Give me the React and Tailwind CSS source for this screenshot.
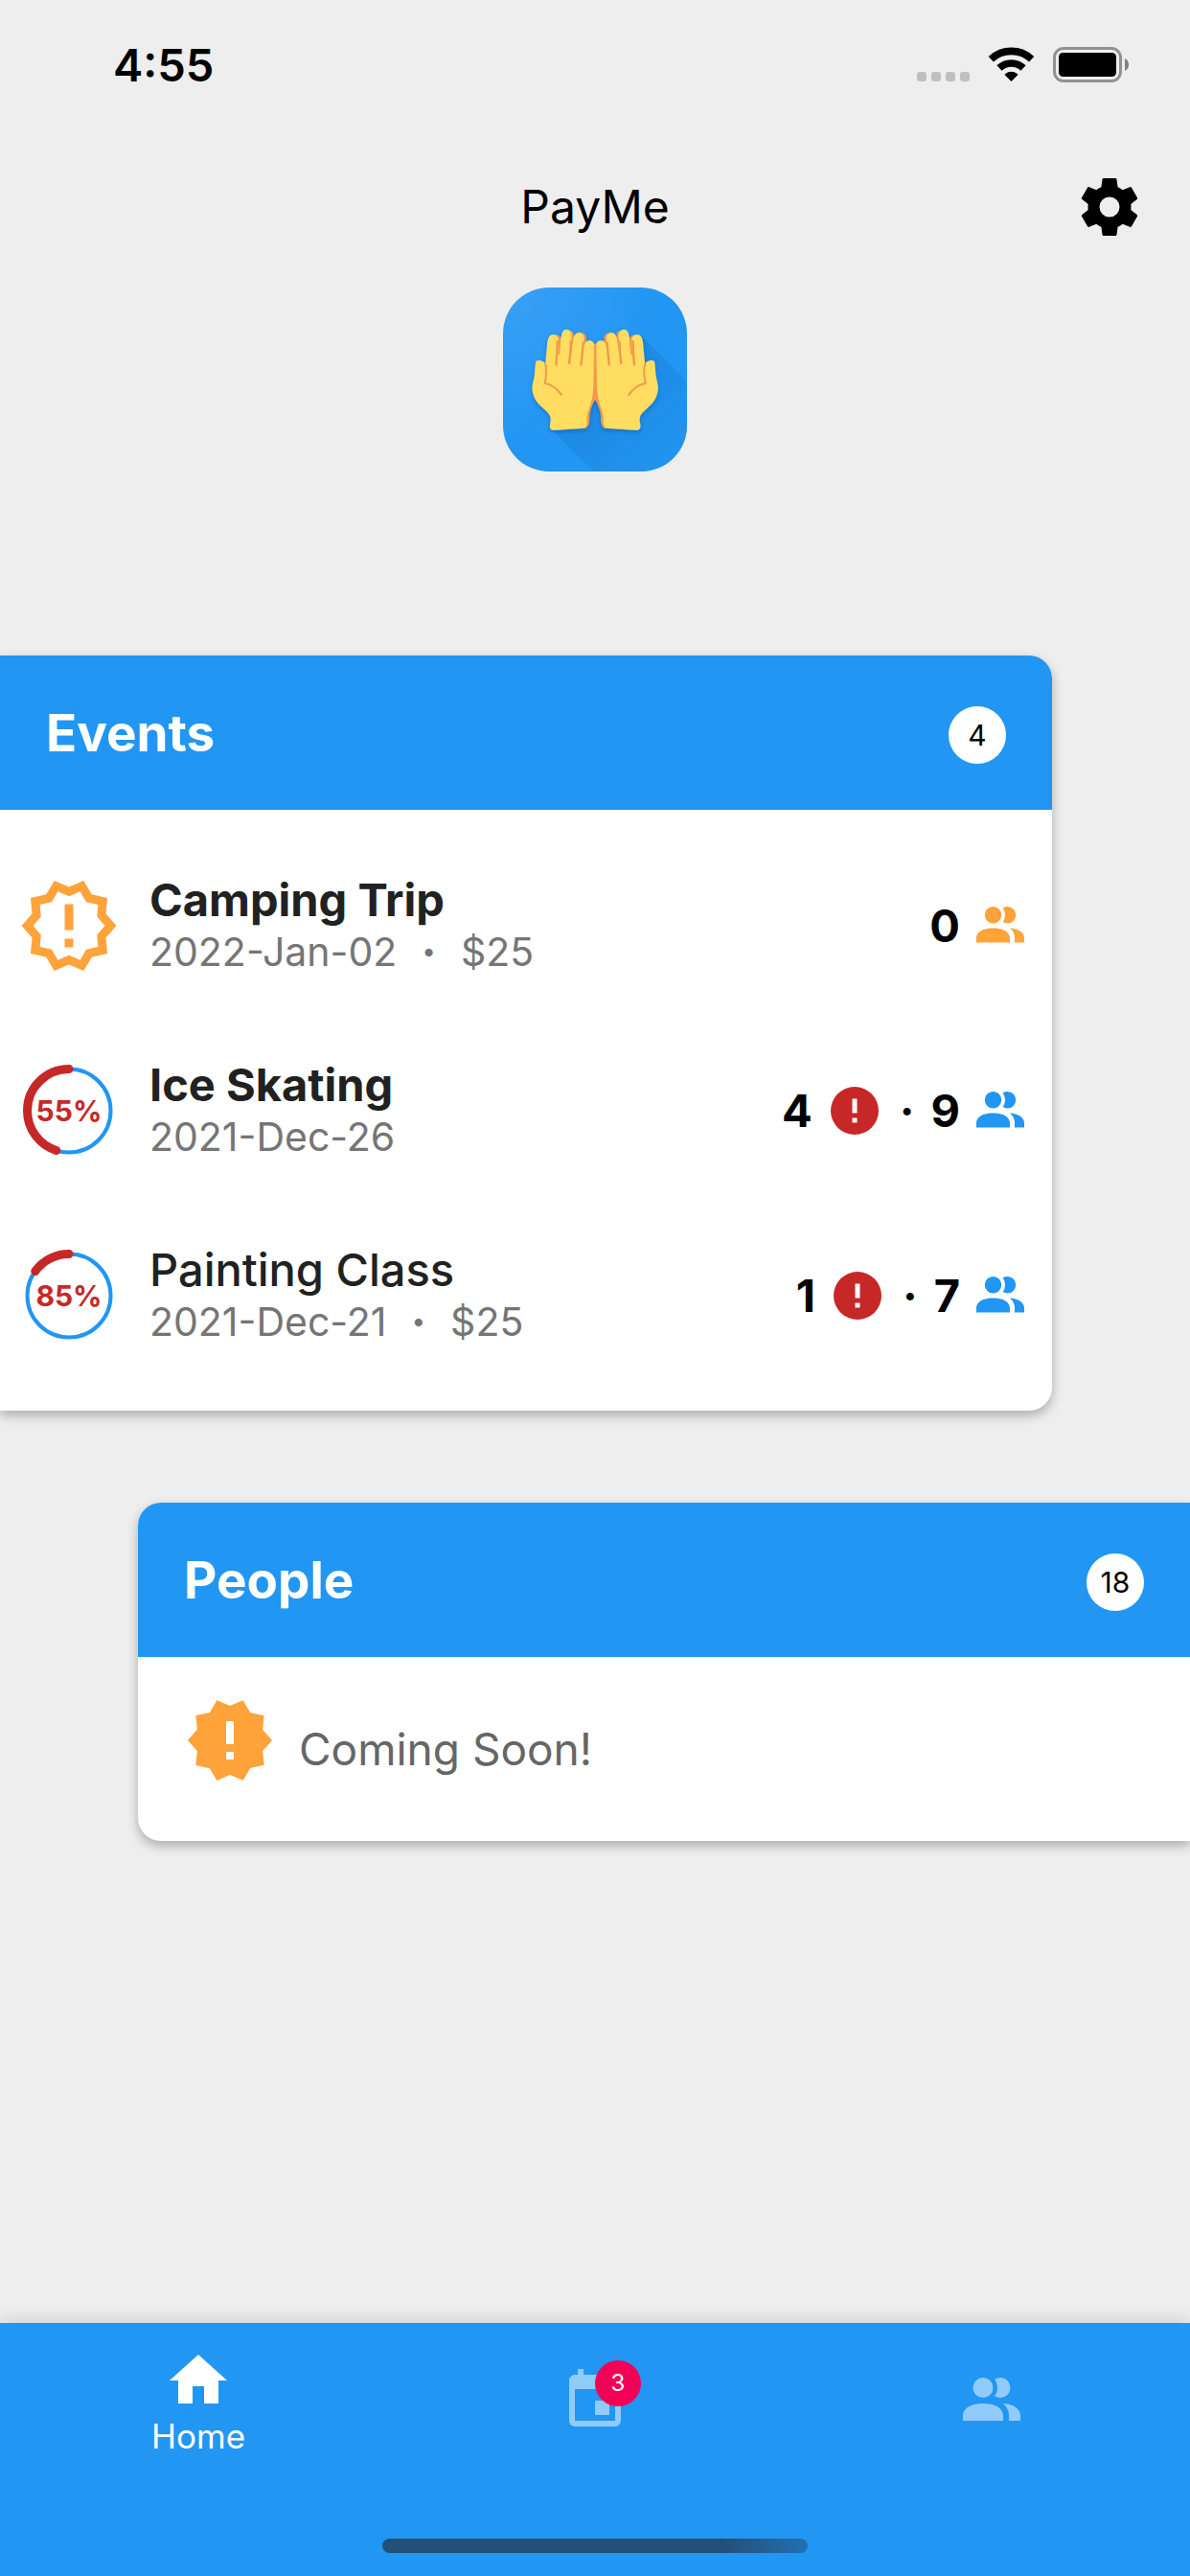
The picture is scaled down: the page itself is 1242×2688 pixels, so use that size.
const PATHS = {
  people:
    'M16 17V19H2V17S2 13 9 13 16 17 16 17M12.5 7.5A3.5 3.5 0 1 0 9 11A3.5 3.5 0 0 0 12.5 7.5M15.94 13A5.32 5.32 0 0 1 18 17V19H22V17S22 13.37 15.94 13M15 4A3.39 3.39 0 0 0 13.07 4.59A5 5 0 0 1 13.07 10.41A3.39 3.39 0 0 0 15 11A3.5 3.5 0 0 0 15 4Z',
  home: 'M10,20V14H14V20H19V12H22L12,3L2,12H5V20H10Z',
  calendar:
    'M19,19H5V8H19M16,1V3H8V1H6V3H5C3.89,3 3,3.89 3,5V19A2,2 0 0,0 5,21H19A2,2 0 0,0 21,19V5C21,3.89 20.1,3 19,3H18V1M17,12H12V17H17V12Z',
  cog: 'M12,15.5A3.5,3.5 0 0,1 8.5,12A3.5,3.5 0 0,1 12,8.5A3.5,3.5 0 0,1 15.5,12A3.5,3.5 0 0,1 12,15.5M19.43,12.97C19.47,12.65 19.5,12.33 19.5,12C19.5,11.67 19.47,11.34 19.43,11L21.54,9.37C21.73,9.22 21.78,8.95 21.66,8.73L19.66,5.27C19.54,5.05 19.27,4.96 19.05,5.05L16.56,6.05C16.04,5.66 15.5,5.32 14.87,5.07L14.5,2.42C14.46,2.18 14.25,2 14,2H10C9.75,2 9.54,2.18 9.5,2.42L9.13,5.07C8.5,5.32 7.96,5.66 7.44,6.05L4.95,5.05C4.73,4.96 4.46,5.05 4.34,5.27L2.34,8.73C2.21,8.95 2.27,9.22 2.46,9.37L4.57,11C4.53,11.34 4.5,11.67 4.5,12C4.5,12.33 4.53,12.65 4.57,12.97L2.46,14.63C2.27,14.78 2.21,15.05 2.34,15.27L4.34,18.73C4.46,18.95 4.73,19.03 4.95,18.95L7.44,17.94C7.96,18.34 8.5,18.68 9.13,18.93L9.5,21.58C9.54,21.82 9.75,22 10,22H14C14.25,22 14.46,21.82 14.5,21.58L14.87,18.93C15.5,18.67 16.04,18.34 16.56,17.94L19.05,18.95C19.27,19.03 19.54,18.95 19.66,18.73L21.66,15.27C21.78,15.05 21.73,14.78 21.54,14.63L19.43,12.97Z',
  alertCircle:
    'M13,13H11V7H13M13,17H11V15H13M12,2A10,10 0 0,0 2,12A10,10 0 0,0 12,22A10,10 0 0,0 22,12A10,10 0 0,0 12,2Z',
  decagram:
    'M23,12L20.56,14.78L20.9,18.46L17.29,19.28L15.4,22.46L12,21L8.6,22.47L6.71,19.29L3.1,18.47L3.44,14.78L1,12L3.44,9.21L3.1,5.53L6.71,4.72L8.6,1.54L12,3L15.4,1.54L17.29,4.72L20.9,5.54L20.56,9.22L23,12ZM13,17V15H11V17H13M13,13V7H11V13H13Z',
  decagramOutline:
    'M23,12L20.56,14.78L20.9,18.46L17.29,19.28L15.4,22.46L12,21L8.6,22.47L6.71,19.29L3.1,18.47L3.44,14.78L1,12L3.44,9.21L3.1,5.53L6.71,4.72L8.6,1.54L12,3L15.4,1.54L17.29,4.72L20.9,5.54L20.56,9.22L23,12M20.33,12L18.5,9.89L18.74,7.1L16,6.5L14.58,4.07L12,5.18L9.42,4.07L8,6.5L5.26,7.09L5.5,9.88L3.67,12L5.5,14.1L5.26,16.9L8,17.5L9.42,19.93L12,18.81L14.58,19.92L16,17.5L18.74,16.89L18.5,14.1L20.33,12M11,15H13V17H11V15M11,7H13V13H11V7',
}

function Icon({ name, className }) {
  return (
    <svg viewBox="0 0 24 24" fill="currentColor" fillRule="evenodd" aria-hidden="true" className={className}>
      <path d={PATHS[name]} />
    </svg>
  )
}

function StatusBar() {
  return (
    <div className="flex h-[132px] items-start justify-between pr-16 pl-[118px]">
      <span className="mt-[38px] text-[47px] leading-[60px] font-semibold">4:55</span>
      <svg viewBox="0 0 221 38" className="mt-12 h-[38px] w-[221px]" aria-hidden="true">
        <g fill="#bfbfbf">
          <rect x="0" y="27" width="10" height="10" rx="3" />
          <rect x="15" y="27" width="10" height="10" rx="3" />
          <rect x="30" y="27" width="10" height="10" rx="3" />
          <rect x="45" y="27" width="10" height="10" rx="3" />
        </g>
        <g fill="none" stroke="#000" strokeWidth="7.6">
          <path d="M77.3 13.8A31 31 0 0 1 119.7 13.8" />
          <path d="M86 23A18 18 0 0 1 111 23" />
        </g>
        <path d="M98.5 37L91.8 30.2Q91.4 29.5 92.2 29A11 11 0 0 1 104.8 29Q105.6 29.5 105.2 30.2Z" />
        <rect x="143.5" y="2.5" width="69" height="34" rx="9.5" fill="none" stroke="#919191" strokeWidth="3" />
        <rect x="148" y="7" width="60" height="25" rx="4.5" />
        <path d="M217 13Q221 15 221 19.5T217 26Z" fill="#808080" />
      </svg>
    </div>
  )
}

/* One open palm; the other hand mirrors it. */
function Palm() {
  return (
    <g>
      <path
        fill="#f19a4b"
        d="M300 540Q313 536 313 550L322 535Q357 516 356 540L357 545Q362 530 376 530Q396 532 396 550L394 565L424 566L424 740Q408 766 406 792Q408 826 392 832L330 820Z"
      />
      <path
        fill="#ffdd60"
        d="M268 625L274 560Q277 537 293 537Q309 538 309 556L307 600L312 600L317 545Q319 521 334 521Q352 522 350 548L345 600L348 600L355 553Q358 531 374 532Q391 533 388 558L386 580L389 574Q393 555 406 556Q421 557 420 575L418 700Q417 735 405 768Q396 790 398 815Q397 829 384 831L293 837Q279 835 282 818Q289 795 274 781L247 755Q227 733 226 704Q228 688 233 668L237 624Q240 616 252 619Q264 621 268 629Z"
      />
      <path d="M305 556Q305 590 301 634M348 556Q347 590 342 630M386 560Q384 600 379 634" fill="none" stroke="#f19a4b" strokeWidth="7" />
      <path d="M267 628Q274 653 266 690Q297 695 320 728" fill="none" stroke="#f19a4b" strokeWidth="6" />
    </g>
  )
}

function Logo() {
  return (
    <svg viewBox="135 390 576 576" className="size-48" role="img" aria-label="PayMe logo">
      <defs>
        <radialGradient id="sheen" gradientUnits="userSpaceOnUse" cx="135" cy="390" r="520">
          <stop offset="0" stopColor="#399ff5" />
          <stop offset="0.45" stopColor="#2e9bf4" />
          <stop offset="1" stopColor="#2196f3" />
        </radialGradient>
        <clipPath id="tile">
          <rect x="135" y="390" width="576" height="576" rx="144" />
        </clipPath>
        <linearGradient id="cast" x1="0" y1="0" x2="1" y2="1">
          <stop offset="0.3" stopColor="#1c84da" />
          <stop offset="1" stopColor="#2196f3" />
        </linearGradient>
        <filter id="lift" x="-10%" y="-10%" width="120%" height="125%">
          <feDropShadow dx="0" dy="6" stdDeviation="7" floodColor="#0d47a1" floodOpacity="0.45" />
        </filter>
      </defs>
      <g clipPath="url(#tile)">
        <rect x="135" y="390" width="576" height="576" fill="url(#sheen)" />
        <path d="M288 835L570 543L711 684V966H420Z" fill="url(#cast)" opacity="0.8" />
        <g filter="url(#lift)">
          <Palm />
          <g transform="translate(847 0) scale(-1 1)">
            <Palm />
          </g>
        </g>
      </g>
    </svg>
  )
}

function CardHeader({ title, count }) {
  return (
    <div className="flex h-[161px] items-center justify-between bg-[#2196f3] px-12">
      <h2 className="text-[53px] leading-[60px] font-bold text-white">{title}</h2>
      <span className="mt-1 flex size-[60px] items-center justify-center rounded-full bg-white text-[30px] leading-none">
        {count}
      </span>
    </div>
  )
}

function Ring({ percent }) {
  const length = 2 * Math.PI * 43.5
  const remaining = (length * (100 - percent)) / 100
  return (
    <div className="grid size-[108px] place-items-center">
      <svg viewBox="0 0 108 108" fill="none" className="col-start-1 row-start-1 size-[108px]" aria-hidden="true">
        <circle cx="54" cy="54" r="43.5" stroke="#2196f3" strokeWidth="4" />
        <circle
          cx="54"
          cy="54"
          r="43.5"
          stroke="#c62828"
          strokeWidth="9"
          strokeLinecap="round"
          strokeDasharray={`${remaining} ${length}`}
          transform="translate(108 0) scale(-1 1) rotate(-90 54 54)"
        />
      </svg>
      <span className="col-start-1 row-start-1 text-[30px] leading-none font-bold text-[#c62828]">{percent}%</span>
    </div>
  )
}

const EVENTS = [
  { name: 'Camping Trip', date: '2022-Jan-02', price: '$25', people: 0 },
  { name: 'Ice Skating', date: '2021-Dec-26', percent: 55, due: 4, people: 9 },
  { name: 'Painting Class', date: '2021-Dec-21', price: '$25', percent: 85, due: 1, people: 7, seen: true },
]

function EventRow({ event }) {
  const started = event.percent !== undefined
  return (
    <li className="flex h-[193px] items-center pr-6 pl-[18px]">
      {started ? <Ring percent={event.percent} /> : <Icon name="decagramOutline" className="size-[108px] text-[#ffa33a]" />}
      <div className="ml-[30px] flex-1">
        <h3 className={event.seen ? 'text-[47px] leading-[54px] font-medium text-[#212121]' : 'text-[47px] leading-[54px] font-bold text-[#212121]'}>
          {event.name}
        </h3>
        <p className="flex items-center text-[41px] leading-[54px] text-[#757575]">
          <span>{event.date}</span>
          {event.price && (
            <>
              <span className="mx-[26px] text-[26px]">•</span>
              <span>{event.price}</span>
            </>
          )}
        </p>
      </div>
      <div className="flex items-center text-[47px] leading-[60px] font-bold">
        {event.due !== undefined && (
          <>
            <span>{event.due}</span>
            <Icon name="alertCircle" className="ml-[14px] size-[60px] text-[#c62828]" />
            <span className="mx-[17px]">·</span>
          </>
        )}
        <span>{event.people}</span>
        <Icon name="people" className={started ? 'ml-3 size-[60px] text-[#2196f3]' : 'ml-3 size-[60px] text-[#ffa33a]'} />
      </div>
    </li>
  )
}

export default function App() {
  return (
    <div className="flex min-h-screen flex-col overflow-x-hidden bg-[#eeeeee] font-['Inter',sans-serif] text-black">
      <StatusBar />
      <header className="grid h-[168px] grid-cols-[1fr_auto_1fr] items-center px-12">
        <h1 className="col-start-2 text-[48px] leading-[60px]">PayMe</h1>
        <button type="button" aria-label="Settings" className="justify-self-end">
          <Icon name="cog" className="size-[72px]" />
        </button>
      </header>
      <main className="flex flex-1 flex-col pb-24">
        <div className="flex justify-center">
          <Logo />
        </div>
        <section className="mt-48 mr-36 overflow-hidden rounded-r-3xl bg-white shadow-[0_5px_12px_rgba(0,0,0,0.28)]">
          <CardHeader title="Events" count="4" />
          <ul className="py-6">
            {EVENTS.map((event) => (
              <EventRow key={event.name} event={event} />
            ))}
          </ul>
        </section>
        <section className="mt-24 ml-36 overflow-hidden rounded-l-3xl bg-white shadow-[0_5px_12px_rgba(0,0,0,0.28)]">
          <CardHeader title="People" count="18" />
          <div className="flex h-48 items-center px-12">
            <Icon name="decagram" className="mb-[18px] size-24 text-[#ffa33a]" />
            <p className="ml-6 text-[46px] leading-[60px] text-[#666666]">Coming Soon!</p>
          </div>
        </section>
      </main>
      <nav className="flex h-[264px] flex-col justify-between bg-[#2196f3] pb-6 text-white shadow-[0_-4px_16px_rgba(0,0,0,0.12)]">
        <div className="grid grid-cols-3">
          <a href="#home" aria-current="page" className="flex flex-col items-center pt-6">
            <Icon name="home" className="size-[72px]" />
            <span className="text-[35px] leading-[45px]">Home</span>
          </a>
          <a href="#events" aria-label="Events" className="flex flex-col items-center pt-[45px]">
            <span className="relative">
              <Icon name="calendar" className="size-[72px] text-white/50" />
              <span className="absolute -top-[6px] left-9 flex size-12 items-center justify-center rounded-full bg-[#f50057] text-[24px] leading-none">
                3
              </span>
            </span>
          </a>
          <a href="#people" aria-label="People" className="flex flex-col items-center pt-[45px]">
            <Icon name="people" className="size-[72px] text-white/50" />
          </a>
        </div>
        <div className="h-[15px] w-[444px] self-center rounded-full bg-linear-to-r from-[#225078] from-80% to-[#2170b3]" />
      </nav>
    </div>
  )
}
